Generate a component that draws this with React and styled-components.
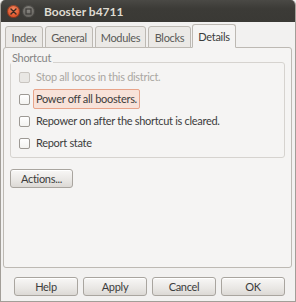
import React from 'react';
import styled, { createGlobalStyle } from 'styled-components';

const GlobalStyle = createGlobalStyle`
  html, body {
    margin: 0;
    padding: 0;
    background: #f2f1f0;
  }
  body {
    font-family: Lato, "Liberation Sans", sans-serif;
  }
`;

const Window = styled.div`
  box-sizing: border-box;
  width: 296px;
  height: 302px;
  display: flex;
  flex-direction: column;
  background: #f2f1f0;
  border: 1px solid #a29e98;
  border-top: none;
  border-radius: 5px 5px 0 0;
  overflow: hidden;
  font-size: 11px;
  letter-spacing: -0.3px;
  color: #3c3c3c;
`;

const TitleBar = styled.div`
  height: 22px;
  flex: none;
  display: flex;
  align-items: center;
  padding-left: 7px;
  background: linear-gradient(#4a4945, #3c3b37 40%, #3a3935);
  margin: 0 -1px;
`;

const WinButton = styled.span`
  width: 13px;
  height: 13px;
  border-radius: 50%;
  margin-right: 2px;
  display: flex;
  align-items: center;
  justify-content: center;
  background: ${(p) => (p.close
    ? 'radial-gradient(circle at 50% 35%, #f48a63, #e0592f 60%, #c4431f)'
    : 'radial-gradient(circle at 50% 35%, #8a8883, #6b6964 60%, #585651)')};
  box-shadow: inset 0 0 0 1px rgba(0, 0, 0, 0.35);
`;

const Title = styled.span`
  margin-left: 7px;
  font-weight: bold;
  font-size: 12px;
  letter-spacing: 0;
  color: #dfdbd2;
`;

const Body = styled.div`
  flex: 1;
  display: flex;
  flex-direction: column;
  padding: 2px 3px 0 2px;
`;

const TabRow = styled.div`
  display: flex;
  align-items: flex-end;
  gap: 2px;
  padding-left: 2px;
  height: 24px;
  position: relative;
  z-index: 1;
  margin-bottom: -1px;
`;

const Tab = styled.div`
  box-sizing: border-box;
  width: ${(p) => p.w}px;
  height: ${(p) => (p.active ? 24 : 22)}px;
  display: flex;
  align-items: center;
  justify-content: center;
  border: 1px solid #bdb9b3;
  border-bottom: ${(p) => (p.active ? '1px solid #f5f4f3' : '1px solid #bdb9b3')};
  border-radius: 3px 3px 0 0;
  background: ${(p) => (p.active ? '#f5f4f3' : '#ebe9e6')};
  color: ${(p) => (p.active ? '#3c3c3c' : '#5a5a58')};
  margin-left: ${(p) => (p.active ? -1 : 0)}px;
`;

const Panel = styled.div`
  box-sizing: border-box;
  height: 221px;
  border: 1px solid #bdb9b3;
  border-radius: 3px;
  background: #f5f4f3;
  padding: 0 6px 0 6px;
  display: flex;
  flex-direction: column;
  align-items: flex-start;
`;

const Group = styled.fieldset`
  box-sizing: border-box;
  align-self: stretch;
  margin: 3px 0 0 0;
  padding: 0 0 3px 0;
  border: 1px solid #d6d3cf;
  border-radius: 3px;
`;

const Legend = styled.legend`
  padding: 0 2px 9px 1px;
  margin: 0 0 -7px 0;
  line-height: 13px;
  color: #858585;
`;

const Row = styled.label`
  display: flex;
  align-items: center;
  height: 22px;
  padding-left: 8px;
  color: ${(p) => (p.disabled ? '#aaa7a2' : '#3c3c3c')};
`;

const Box = styled.span`
  box-sizing: border-box;
  width: 11px;
  height: 11px;
  border-radius: 2px;
  border: 1px solid ${(p) => (p.disabled ? '#c9c5c0' : '#9d9994')};
  background: ${(p) => (p.disabled ? '#e9e7e4' : 'linear-gradient(#ffffff, #f3f2f0)')};
  margin-right: 3px;
  flex: none;
`;

const RowText = styled.span`
  padding: 2px 2px 3px 2px;
  border: 1px solid ${(p) => (p.focus ? '#e8a48a' : 'transparent')};
  border-radius: 2px;
  background: ${(p) => (p.focus ? '#f8e2d9' : 'transparent')};
  line-height: 13px;
`;

const Button = styled.button`
  box-sizing: border-box;
  width: ${(p) => p.w}px;
  height: ${(p) => p.h || 19}px;
  border: 1px solid #a9a59f;
  border-radius: 3px;
  background: linear-gradient(#f8f7f6, #e9e7e4 60%, #dcd9d5);
  box-shadow: inset 0 1px 0 #ffffff;
  font-family: inherit;
  font-size: 11px;
  letter-spacing: -0.3px;
  color: #3c3c3c;
  padding: 0;
`;

const ActionsButton = styled(Button)`
  margin-top: 11px;
`;

const ButtonRow = styled.div`
  display: flex;
  gap: 5px;
  padding: 9px 0 0 11px;
`;

function CloseGlyph() {
  return (
    <svg width="7" height="7" viewBox="0 0 7 7">
      <path d="M1 1L6 6M6 1L1 6" stroke="#3a2a22" strokeWidth="1.4" strokeLinecap="round" />
    </svg>
  );
}

function MinGlyph() {
  return (
    <svg width="7" height="7" viewBox="0 0 7 7">
      <rect x="1" y="1" width="5" height="5" fill="none" stroke="#3c3b38" strokeWidth="1.2" />
    </svg>
  );
}

const tabs = [
  { label: 'Index', w: 38 },
  { label: 'General', w: 48 },
  { label: 'Modules', w: 51 },
  { label: 'Blocks', w: 43 },
  { label: 'Details', w: 44, active: true },
];

const options = [
  { label: 'Stop all locos in this district.', disabled: true },
  { label: 'Power off all boosters.', focus: true },
  { label: 'Repower on after the shortcut is cleared.' },
  { label: 'Report state' },
];

export default function App() {
  return (
    <>
      <GlobalStyle />
      <Window>
        <TitleBar>
          <WinButton close><CloseGlyph /></WinButton>
          <WinButton><MinGlyph /></WinButton>
          <Title>Booster b4711</Title>
        </TitleBar>
        <Body>
          <TabRow>
            {tabs.map((t) => (
              <Tab key={t.label} w={t.w} active={t.active}>{t.label}</Tab>
            ))}
          </TabRow>
          <Panel>
            <Group>
              <Legend>Shortcut</Legend>
              {options.map((o) => (
                <Row key={o.label} disabled={o.disabled}>
                  <Box disabled={o.disabled} />
                  <RowText focus={o.focus}>{o.label}</RowText>
                </Row>
              ))}
            </Group>
            <ActionsButton w={63} h={19}>Actions...</ActionsButton>
          </Panel>
          <ButtonRow>
            <Button w={64}>Help</Button>
            <Button w={64}>Apply</Button>
            <Button w={64}>Cancel</Button>
            <Button w={64}>OK</Button>
          </ButtonRow>
        </Body>
      </Window>
    </>
  );
}
